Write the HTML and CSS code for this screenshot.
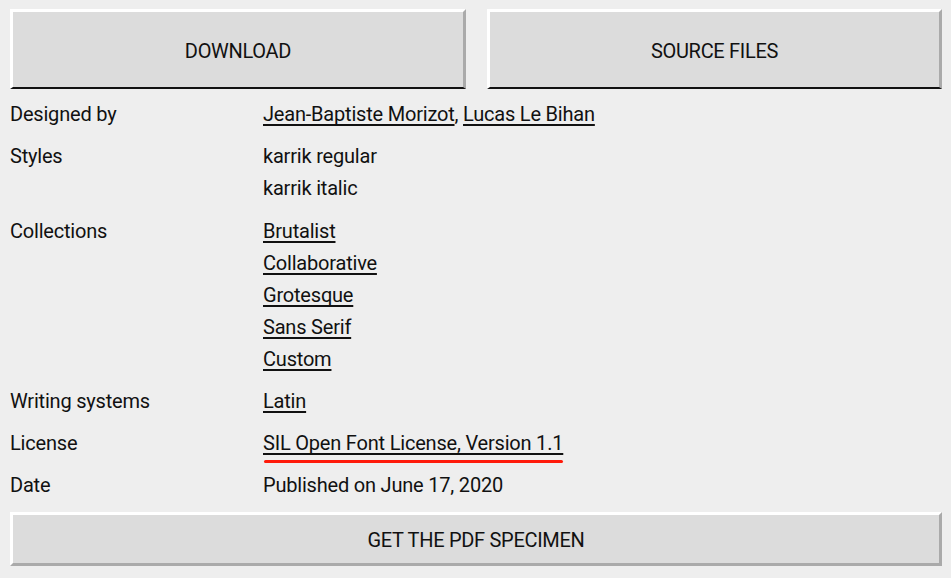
FILE: index.html
```html
<!DOCTYPE html>
<html lang="en">
<head>
<meta charset="utf-8">
<title>karrik</title>
<link rel="stylesheet" href="styles.css">
</head>
<body>
<div class="page">
  <div class="top-buttons">
    <a class="btn btn-top" href="#">DOWNLOAD</a>
    <a class="btn btn-top" href="#">SOURCE FILES</a>
  </div>
  <dl class="info">
    <dt>Designed by</dt>
    <dd><a class="link" href="#">Jean-Baptiste Morizot</a>, <a class="link" href="#">Lucas Le Bihan</a></dd>
    <dt>Styles</dt>
    <dd><span class="line">karrik regular</span><span class="line">karrik italic</span></dd>
    <dt class="extra">Collections</dt>
    <dd class="extra">
      <span class="line"><a class="link" href="#">Brutalist</a></span>
      <span class="line"><a class="link" href="#">Collaborative</a></span>
      <span class="line"><a class="link" href="#">Grotesque</a></span>
      <span class="line"><a class="link" href="#">Sans Serif</a></span>
      <span class="line"><a class="link" href="#">Custom</a></span>
    </dd>
    <dt>Writing systems</dt>
    <dd><a class="link" href="#">Latin</a></dd>
    <dt>License</dt>
    <dd><a class="link link-active" href="#">SIL Open Font License, Version 1.1</a></dd>
    <dt>Date</dt>
    <dd>Published on June 17, 2020</dd>
  </dl>
  <a class="btn btn-bottom" href="#">GET THE PDF SPECIMEN</a>
</div>
</body>
</html>
```
FILE: styles.css
```css
html, body {
  margin: 0;
  padding: 0;
  background: #eeeeee;
}
body {
  font-family: Roboto, "Liberation Sans", sans-serif;
  color: #111111;
  font-size: 20px;
}
.page {
  width: 932px;
  padding: 9px 0 0 10px;
}
.top-buttons {
  display: grid;
  grid-template-columns: 456px 455px;
  column-gap: 21px;
}
.btn {
  display: flex;
  align-items: center;
  justify-content: center;
  box-sizing: border-box;
  background: #dcdcdc;
  color: #111111;
  text-decoration: none;
  border-style: solid;
  border-width: 3px;
  border-color: #ffffff #aaaaaa #aaaaaa #ffffff;
  letter-spacing: -0.3px;
}
.btn-top {
  height: 80px;
  padding-top: 2px;
  border-bottom: 2px solid #111111;
}
.btn-bottom {
  height: 54px;
  margin-top: 11px;
  padding-top: 1px;
}
.info {
  display: grid;
  grid-template-columns: 253px 1fr;
  row-gap: 10px;
  margin: 9px 0 0 0;
  line-height: 32px;
  letter-spacing: -0.2px;
}
.info dt, .info dd {
  margin: 0;
}
.info .extra {
  margin-top: 1px;
}
.line {
  display: block;
}
.link {
  color: #111111;
  text-decoration: underline;
  text-decoration-thickness: 2px;
  text-underline-offset: 3px;
  text-decoration-skip-ink: none;
}
.link-active {
  position: relative;
}
.link-active::after {
  content: "";
  position: absolute;
  left: 1px;
  right: 0;
  bottom: -8px;
  height: 3px;
  border-radius: 2px;
  background: #ff1a0a;
}
```
